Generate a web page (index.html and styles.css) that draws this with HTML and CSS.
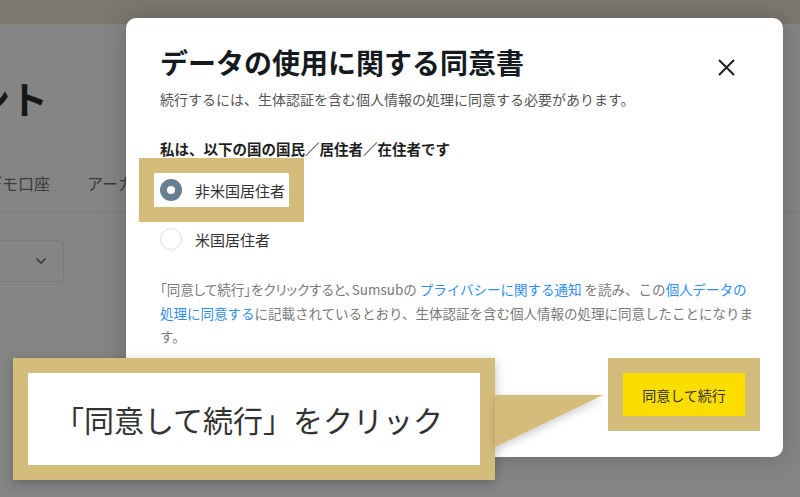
FILE: index.html
```html
<!DOCTYPE html>
<html lang="ja">
<head>
  <meta charset="UTF-8">
  <meta name="viewport" content="width=device-width, initial-scale=1.0">
  <title>データの使用に関する同意書</title>
  <link rel="stylesheet" href="styles.css">
</head>
<body>

  <!-- Page behind the dialog (dimmed) -->
  <div class="topbar"></div>
  <main class="page">
    <h1 class="page-title">ント</h1>
    <nav class="tabs">
      <span class="tab">デモ口座</span>
      <span class="tab">アーカイブ</span>
    </nav>
    <div class="select">
      <svg class="chevron" width="12" height="8" viewBox="0 0 12 8"><path d="M1.5 1.5 L6 6 L10.5 1.5" fill="none" stroke="#3a3a3a" stroke-width="1.6"/></svg>
    </div>
  </main>

  <!-- Consent dialog -->
  <div class="modal">
    <div class="modal-head">
      <h2 class="modal-title">データの使用に関する同意書</h2>
      <button class="close" aria-label="閉じる">
        <svg width="17" height="17" viewBox="0 0 17 17"><path d="M1 1 L16 16 M16 1 L1 16" stroke="#1e1e1e" stroke-width="2"/></svg>
      </button>
    </div>
    <p class="subtitle">続行するには、生体認証を含む個人情報の処理に同意する必要があります。</p>

    <p class="question">私は、以下の国の国民／居住者／在住者です</p>
    <div class="options">
      <label class="option marked">
        <span class="radio checked"></span>
        <span>非米国居住者</span>
      </label>
      <label class="option">
        <span class="radio"></span>
        <span>米国居住者</span>
      </label>
    </div>

    <p class="notice"><span class="tight">「同意して続行」をクリックすると、</span>Sumsubの <a href="#">プライバシーに関する通知</a> を読み、この<a href="#">個人データの</a><br><a href="#">処理に同意する</a>に記載されているとおり、生体認証を含む個人情報の処理に同意したことになりま<br>す。</p>

    <div class="modal-foot">
      <button class="agree marked">同意して続行</button>
    </div>
  </div>

  <!-- Annotation callout -->
  <div class="callout">
    <span class="callout-text">「同意して続行」をクリック</span>
    <svg class="pointer" width="108" height="52" viewBox="0 0 108 52"><polygon points="0,0 108,0 0,52" fill="#d4bd7b"/></svg>
  </div>

</body>
</html>
```

FILE: styles.css
```css
/* Global styles */
body {
  margin: 0;
  width: 800px;
  height: 497px;
  overflow: hidden;
  background-color: #858585;
  font-family: "Noto Sans CJK JP", "Noto Sans", sans-serif;
  color: #333;
  position: relative;
}

/* Dimmed page */
.topbar {
  height: 24px;
  background-color: #7c7870;
  border-bottom: 1px solid #8c887c;
}

.page {
  padding-top: 51px;
}

.page-title {
  margin: 0 0 0 -28px;
  font-size: 38px;
  line-height: 44px;
  font-weight: 700;
  color: #161616;
}

.tabs {
  display: flex;
  gap: 37px;
  margin-top: 51px;
  margin-left: -14px;
  padding-bottom: 17px;
  border-bottom: 1px solid #7b7b7b;
  font-size: 16px;
  line-height: 24px;
  color: #3c3c3c;
}

.select {
  display: flex;
  align-items: center;
  justify-content: flex-end;
  box-sizing: border-box;
  width: 72px;
  height: 42px;
  margin-top: 27px;
  margin-left: -8px;
  padding-right: 16px;
  border: 1px solid #7a7a7a;
  border-radius: 5px;
}

/* Dialog */
.modal {
  position: absolute;
  top: 18px;
  left: 126px;
  width: 657px;
  height: 439px;
  box-sizing: border-box;
  padding: 26px 38px 41px 34px;
  display: flex;
  flex-direction: column;
  background-color: #fff;
  border-radius: 10px;
  box-shadow: 0 0 24px rgba(0, 0, 0, 0.22);
}

.modal-head {
  display: flex;
  justify-content: space-between;
  align-items: flex-start;
}

.modal-title {
  margin: 0;
  font-size: 28px;
  line-height: 36px;
  font-weight: 700;
  color: #151a1e;
}

.close {
  width: 24px;
  height: 24px;
  margin-top: 11px;
  margin-right: 7px;
  padding: 0;
  border: none;
  background: none;
  display: flex;
  align-items: center;
  justify-content: center;
}

.subtitle {
  margin: 9px 0 0;
  font-size: 14px;
  line-height: 20px;
  color: #555;
}

.question {
  margin: 30px 0 0;
  font-size: 14.5px;
  line-height: 20px;
  font-weight: 700;
  color: #1e1e1e;
}

.options {
  display: flex;
  flex-direction: column;
  align-items: flex-start;
  gap: 15px;
  margin-top: 14px;
}

.option {
  display: flex;
  align-items: center;
  gap: 13px;
  height: 34px;
  margin-left: -6px;
  padding: 0 4px 0 6px;
  background-color: #fff;
  font-size: 15px;
  color: #333;
}

.radio {
  box-sizing: border-box;
  width: 22px;
  height: 22px;
  border-radius: 50%;
  border: 1px solid #e0e0e0;
  background-color: #fff;
}

.radio.checked {
  border: 7px solid #687f90;
}

.notice {
  margin: 22px 0 0;
  font-size: 13.5px;
  line-height: 23.5px;
  color: #7a7a7a;
  white-space: nowrap;
}

.notice a {
  color: #2f8ef0;
  text-decoration: none;
}

.tight {
  font-feature-settings: "palt";
}

.modal-foot {
  margin-top: auto;
  display: flex;
  justify-content: flex-end;
}

.agree {
  width: 122px;
  height: 43px;
  border: none;
  background-color: #fcdd00;
  font-family: inherit;
  font-size: 14px;
  color: #333;
}

/* Annotation highlight */
.marked {
  outline: 15px solid #d4bd7b;
}

.callout {
  position: absolute;
  left: 13px;
  top: 358px;
  width: 482px;
  height: 122px;
  box-sizing: border-box;
  border: 15px solid #d4bd7b;
  background-color: #fff;
  display: flex;
  align-items: center;
  padding-left: 26px;
  box-shadow: 0 3px 10px rgba(0, 0, 0, 0.25);
}

.callout-text {
  font-size: 30px;
  color: #333;
}

.pointer {
  position: absolute;
  left: 467px;
  top: 22px;
  filter: drop-shadow(0 3px 4px rgba(0, 0, 0, 0.2));
}
```
